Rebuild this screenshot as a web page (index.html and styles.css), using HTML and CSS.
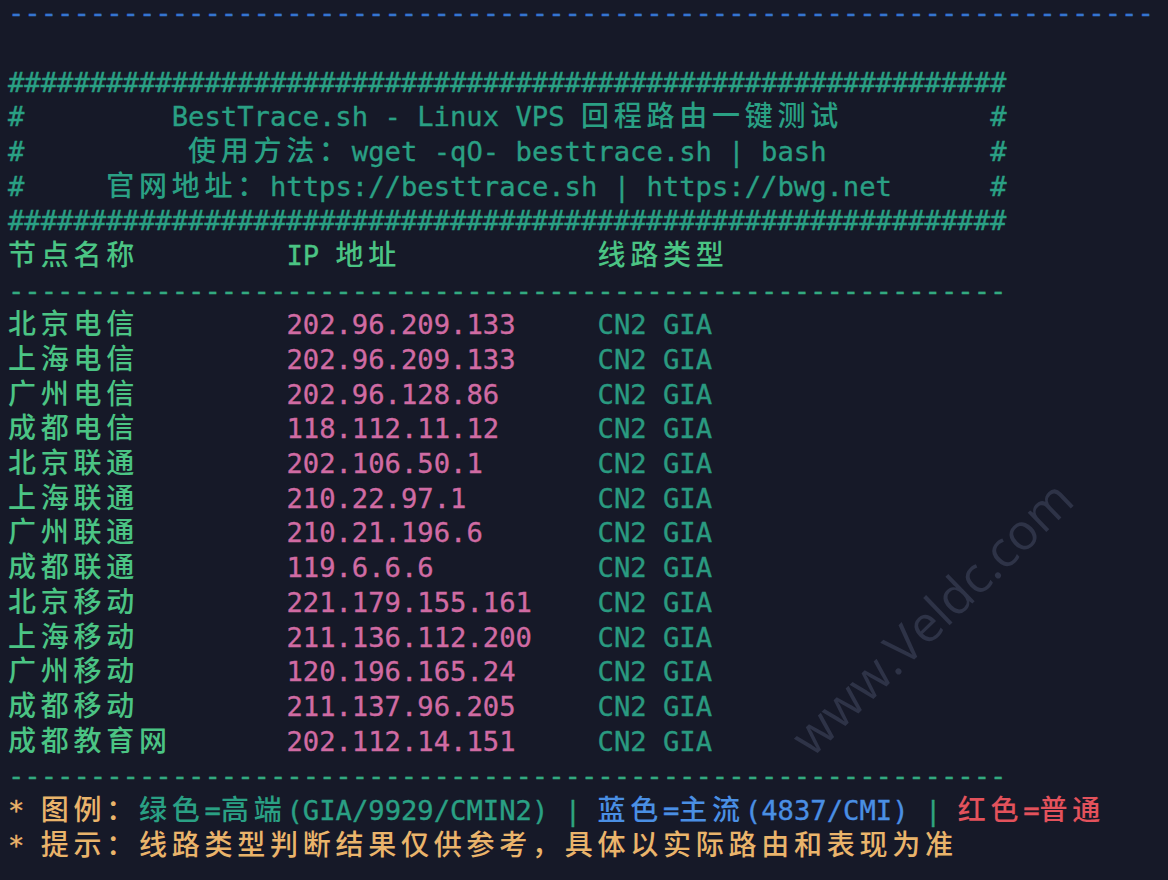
FILE: index.html
```html
<!DOCTYPE html>
<html lang="zh-CN">
<head>
<meta charset="utf-8">
<title>BestTrace.sh</title>
<link rel="stylesheet" href="styles.css">
</head>
<body>
<div class="term">
<div class="ln blue">----------------------------------------------------------------------</div>
<div class="ln"></div>
<div class="ln teal">#############################################################</div>
<div class="ln teal">#         BestTrace.sh - Linux VPS <span class="cjk">回程路由一键测试</span>         #</div>
<div class="ln teal">#          <span class="cjk">使用方法：</span>wget -qO- besttrace.sh | bash          #</div>
<div class="ln teal">#     <span class="cjk">官网地址：</span>https://besttrace.sh | https://bwg.net      #</div>
<div class="ln teal">#############################################################</div>
<div class="row head"><span class="cjk">节点名称</span><span>IP <span class="cjk">地址</span></span><span class="cjk">线路类型</span></div>
<div class="ln dash">-------------------------------------------------------------</div>
<div class="rows">
<div class="row"><span class="name cjk">北京电信</span><span class="ip">202.96.209.133</span><span class="type">CN2 GIA</span></div>
<div class="row"><span class="name cjk">上海电信</span><span class="ip">202.96.209.133</span><span class="type">CN2 GIA</span></div>
<div class="row"><span class="name cjk">广州电信</span><span class="ip">202.96.128.86</span><span class="type">CN2 GIA</span></div>
<div class="row"><span class="name cjk">成都电信</span><span class="ip">118.112.11.12</span><span class="type">CN2 GIA</span></div>
<div class="row"><span class="name cjk">北京联通</span><span class="ip">202.106.50.1</span><span class="type">CN2 GIA</span></div>
<div class="row"><span class="name cjk">上海联通</span><span class="ip">210.22.97.1</span><span class="type">CN2 GIA</span></div>
<div class="row"><span class="name cjk">广州联通</span><span class="ip">210.21.196.6</span><span class="type">CN2 GIA</span></div>
<div class="row"><span class="name cjk">成都联通</span><span class="ip">119.6.6.6</span><span class="type">CN2 GIA</span></div>
<div class="row"><span class="name cjk">北京移动</span><span class="ip">221.179.155.161</span><span class="type">CN2 GIA</span></div>
<div class="row"><span class="name cjk">上海移动</span><span class="ip">211.136.112.200</span><span class="type">CN2 GIA</span></div>
<div class="row"><span class="name cjk">广州移动</span><span class="ip">120.196.165.24</span><span class="type">CN2 GIA</span></div>
<div class="row"><span class="name cjk">成都移动</span><span class="ip">211.137.96.205</span><span class="type">CN2 GIA</span></div>
<div class="row"><span class="name cjk">成都教育网</span><span class="ip">202.112.14.151</span><span class="type">CN2 GIA</span></div>
</div>
<div class="ln dash">-------------------------------------------------------------</div>
<div class="ln"><span class="orange">* <span class="cjk">图例：</span></span><span class="teal"><span class="cjk">绿色</span>=<span class="cjk">高端</span>(GIA/9929/CMIN2)</span> <span class="sep">|</span> <span class="bl"><span class="cjk">蓝色</span>=<span class="cjk">主流</span>(4837/CMI)</span> <span class="sep">|</span> <span class="red"><span class="cjk">红色</span>=<span class="cjk">普通</span></span></div>
<div class="ln orange">* <span class="cjk">提示：线路类型判断结果仅供参考，具体以实际路由和表现为准</span></div>
</div>
<div class="wm">www.Veldc.com</div>
</body>
</html>
```
FILE: styles.css
```css
:root {
  --cw: 16.376px;
  --lh: 34.68px;
}
html, body {
  margin: 0;
  padding: 0;
  background: #161928;
}
body {
  width: 1168px;
  height: 880px;
  overflow: hidden;
  position: relative;
}
.term {
  margin-top: -3.6px;
  padding-left: 8px;
  font-family: "DejaVu Sans Mono", monospace;
  font-size: 27.2px;
  line-height: var(--lh);
  color: #2aa082;
  -webkit-text-stroke: 0.35px currentColor;
}
.ln {
  height: var(--lh);
  white-space: pre;
}
.cjk {
  font-family: "Noto Sans CJK SC", sans-serif;
  font-size: 28px;
  font-weight: 500;
  line-height: 28px;
  letter-spacing: 4.75px;
  -webkit-text-stroke: 0;
}
.blue { color: #3574d0; }
.teal { color: #2aa084; }
.dash { color: #33aa80; }
.row {
  display: grid;
  grid-template-columns: calc(17 * var(--cw)) calc(19 * var(--cw)) auto;
  height: var(--lh);
  white-space: pre;
}
.head { color: #4bc484; }
.name { color: #4bc484; }
.ip { color: #d06ba3; }
.type { color: #2a9a80; }
.orange { color: #eab46b; }
.sep { color: #2fa57f; }
.bl { color: #4a8fe4; }
.red { color: #e3525c; }
.wm {
  position: absolute;
  left: 931px;
  top: 617px;
  transform: translate(-50%, -50%) rotate(-44deg);
  font-family: "Open Sans", sans-serif;
  font-size: 50px;
  font-weight: 500;
  color: #2e3347;
  white-space: nowrap;
}
```
